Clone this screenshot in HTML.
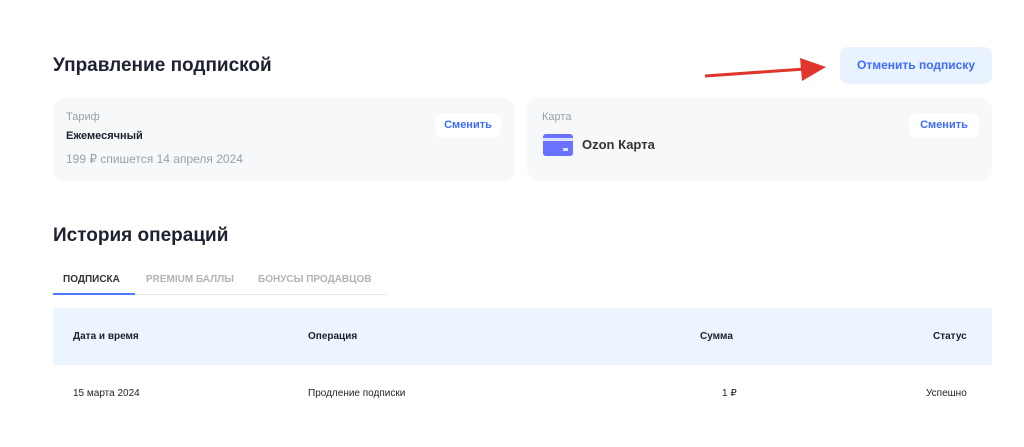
<!DOCTYPE html>
<html><head><meta charset="utf-8"><style>
body{margin:0;width:1024px;height:447px;background:#fff;font-family:"Liberation Sans","DejaVu Sans",sans-serif;position:relative;overflow:hidden;color:#1b1f2b}
.a{position:absolute;white-space:nowrap}
.h{font-size:19px;font-weight:bold;color:#1e2230}
.card{position:absolute;top:98px;height:83px;background:#f7f8fa;border-radius:12px}
.btn{position:absolute;background:#fff;border-radius:8px;color:#3d6bff;font-size:11px;font-weight:bold;text-align:center}
</style></head><body>
<div class="a h" style="left:53px;top:55px">Управление подпиской</div>
<div class="a" style="left:840px;top:47px;width:152px;height:37px;background:#e8f3ff;border-radius:8px;color:#3d6bff;font-size:12px;font-weight:bold;text-align:center;line-height:37px">Отменить подписку</div>
<svg class="a" style="left:700px;top:55px" width="130" height="30"><line x1="5" y1="21" x2="105" y2="14" stroke="#e0352b" stroke-width="3"/><polygon points="100,3 126,12 102,26" fill="#e0352b"/></svg>
<div class="card" style="left:53px;width:462px">
<div class="a" style="left:13px;top:13px;font-size:11px;color:#9aa0a8">Тариф</div>
<div class="a" style="left:13px;top:32px;font-size:11px;font-weight:bold">Ежемесячный</div>
<div class="a" style="left:13px;top:54px;font-size:12px;color:#9aa0a8">199 ₽ спишется 14 апреля 2024</div>
<div class="btn" style="left:382px;top:15px;width:66px;height:25px;line-height:25px">Сменить</div>
</div>
<div class="card" style="left:527px;width:465px">
<div class="a" style="left:15px;top:13px;font-size:11px;color:#9aa0a8">Карта</div>
<svg class="a" style="left:16px;top:36px" width="30" height="22"><rect width="30" height="22" rx="3" fill="#6a70ff"/><rect y="4" width="30" height="3" fill="#fff" opacity=".8"/><rect x="20" y="14" width="5" height="3" fill="#fff" opacity=".8"/></svg>
<div class="a" style="left:55px;top:39px;font-size:13px;font-weight:bold;color:#333">Ozon Карта</div>
<div class="btn" style="left:382px;top:15px;width:70px;height:25px;line-height:25px">Сменить</div>
</div>
<div class="a h" style="left:53px;top:225px">История операций</div>
<div class="a" style="left:63px;top:274px;font-size:10px;font-weight:bold;color:#333">ПОДПИСКА</div>
<div class="a" style="left:146px;top:274px;font-size:10px;font-weight:bold;color:#b0b3b8">PREMIUM БАЛЛЫ</div>
<div class="a" style="left:258px;top:274px;font-size:10px;font-weight:bold;color:#b0b3b8">БОНУСЫ ПРОДАВЦОВ</div>
<div class="a" style="left:53px;top:294px;width:333px;height:1px;background:#e4e6ea"></div>
<div class="a" style="left:53px;top:293px;width:82px;height:2px;background:#4d7cff"></div>
<div class="a" style="left:53px;top:308px;width:939px;height:57px;background:#ebf4ff;border-radius:2px"></div>
<div class="a" style="left:73px;top:331px;font-size:10px;font-weight:bold">Дата и время</div>
<div class="a" style="left:308px;top:331px;font-size:10px;font-weight:bold">Операция</div>
<div class="a" style="left:700px;top:331px;font-size:10px;font-weight:bold">Сумма</div>
<div class="a" style="left:933px;top:331px;font-size:10px;font-weight:bold">Статус</div>
<div class="a" style="left:73px;top:388px;font-size:10px">15 марта 2024</div>
<div class="a" style="left:308px;top:388px;font-size:10px">Продление подписки</div>
<div class="a" style="left:722px;top:388px;font-size:10px">1 ₽</div>
<div class="a" style="left:926px;top:388px;font-size:10px">Успешно</div>
</body></html>
